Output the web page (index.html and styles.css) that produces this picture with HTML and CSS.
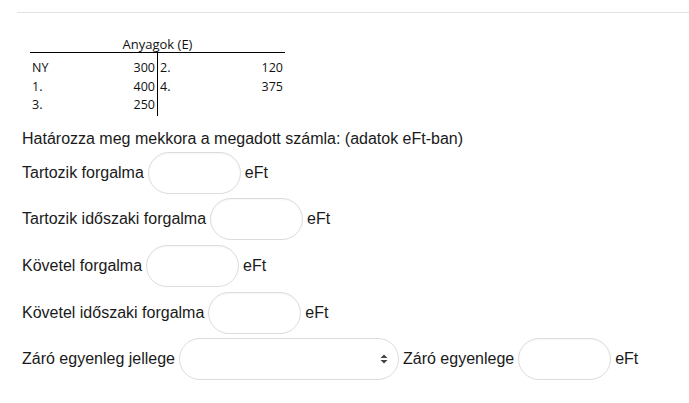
FILE: index.html
```html
<!DOCTYPE html>
<html lang="hu">
<head>
<meta charset="utf-8">
<link rel="stylesheet" href="styles.css">
</head>
<body>
<div class="page">
  <hr class="rule">
  <div class="content">
    <table class="tacc">
      <thead>
        <tr><th colspan="4" class="title">Anyagok (E)</th></tr>
      </thead>
      <tbody>
        <tr class="first"><td class="lbl">NY</td><td class="num split">300</td><td class="lbl r">2.</td><td class="num">120</td></tr>
        <tr><td class="lbl">1.</td><td class="num split">400</td><td class="lbl r">4.</td><td class="num">375</td></tr>
        <tr class="last"><td class="lbl">3.</td><td class="num split">250</td><td class="lbl r"></td><td class="num"></td></tr>
      </tbody>
    </table>

    <p class="lead">Határozza meg mekkora a megadott számla: (adatok eFt-ban)</p>

    <div class="row"><span>Tartozik forgalma</span><input class="field" type="text"><span>eFt</span></div>
    <div class="row"><span>Tartozik időszaki forgalma</span><input class="field" type="text"><span>eFt</span></div>
    <div class="row"><span>Követel forgalma</span><input class="field" type="text"><span>eFt</span></div>
    <div class="row"><span>Követel időszaki forgalma</span><input class="field" type="text"><span>eFt</span></div>
    <div class="row">
      <span>Záró egyenleg jellege</span>
      <div class="selwrap">
        <select class="sel"><option></option></select>
        <svg class="caret" width="8" height="10" viewBox="0 0 8 10"><path d="M4 0.5 L7.5 4 L0.5 4 Z M4 9.5 L7.5 6 L0.5 6 Z" fill="#444"/></svg>
      </div>
      <span>Záró egyenlege</span><input class="field" type="text"><span>eFt</span>
    </div>
  </div>
</div>
</body>
</html>
```
FILE: styles.css
```css
html, body {
  margin: 0;
  padding: 0;
  background: #fff;
}
body {
  font-family: "Liberation Sans", Arial, sans-serif;
  font-size: 16px;
  color: #1a1a1a;
}
.page {
  padding: 12px 0 0 17px;
}
.rule {
  margin: 0;
  border: 0;
  border-top: 1px solid #e2e2e2;
  height: 0;
}
.content {
  padding-left: 5px;
}
.tacc {
  margin: 23px 0 0 8px;
  border-collapse: collapse;
  font-family: "Open Sans", "Liberation Sans", sans-serif;
  font-size: 12.5px;
  color: #111;
}
.tacc .title {
  font-weight: normal;
  text-align: center;
  line-height: 16px;
  padding: 0;
  font-size: 13px;
  border-bottom: 1px solid #000;
}
.tacc td {
  padding: 0;
  line-height: 18.5px;
}
.tacc tr.first td {
  padding-top: 6px;
}
.tacc tr.last td {
  padding-bottom: 1px;
}
.tacc .lbl {
  padding-left: 2px;
  width: 60px;
}
.tacc .num {
  text-align: right;
  padding-right: 2px;
  width: 63px;
}
.tacc .split {
  border-right: 1px solid #000;
}
.lead {
  margin: 13px 0 3px;
  line-height: 20px;
}
.row {
  display: flex;
  align-items: center;
  gap: 4px;
  height: 42px;
  margin-bottom: 4.7px;
}
.field {
  box-sizing: border-box;
  width: 93px;
  height: 42px;
  border: 1px solid #dcdcdc;
  border-radius: 21px;
  box-shadow: inset 0 1px 2px rgba(0,0,0,0.04);
  background: #fff;
  padding: 0 12px;
  font: inherit;
  outline: none;
}
.selwrap {
  position: relative;
  width: 220px;
  height: 42px;
}
.sel {
  appearance: none;
  -webkit-appearance: none;
  box-sizing: border-box;
  width: 100%;
  height: 100%;
  border: 1px solid #dcdcdc;
  border-radius: 21px;
  background: #fff;
  font: inherit;
  padding: 0 12px;
  outline: none;
}
.caret {
  position: absolute;
  right: 11px;
  top: 16px;
  pointer-events: none;
}
```
